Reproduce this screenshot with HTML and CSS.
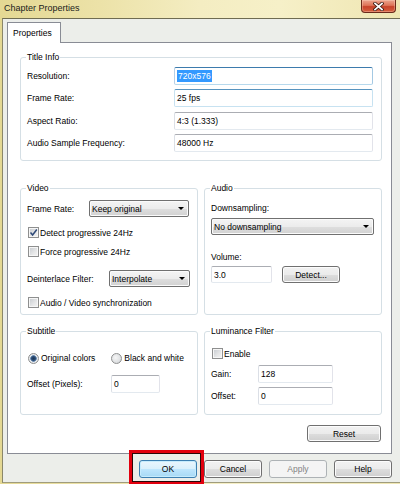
FILE: index.html
```html
<!DOCTYPE html>
<html>
<head>
<meta charset="utf-8">
<title>Chapter Properties</title>
<link rel="stylesheet" href="styles.css">
</head>
<body>
<div class="window">
  <div class="titlebar">
    <span class="title">Chapter Properties</span>
    <div class="close">
      <svg width="11" height="9" viewBox="0 0 11 9"><path d="M2 1.5 L9 7.5 M9 1.5 L2 7.5" stroke="#3b1a12" stroke-width="3.4" stroke-linecap="square" fill="none"/><path d="M2 1.5 L9 7.5 M9 1.5 L2 7.5" stroke="#ffffff" stroke-width="1.7" stroke-linecap="square" fill="none"/></svg>
    </div>
  </div>
  <div class="client">
    <div class="tabs"><div class="tab">Properties</div></div>
    <div class="panel">
      <div class="group">
        <div class="legend">Title Info</div>
        <div class="ti-grid">
          <span>Resolution:</span><div class="tb focus"><span class="sel">720x576</span></div>
          <span>Frame Rate:</span><div class="tb hover">25 fps</div>
          <span>Aspect Ratio:</span><div class="tb">4:3 (1.333)</div>
          <span>Audio Sample Frequency:</span><div class="tb">48000 Hz</div>
        </div>
      </div>

      <div class="row2 mid">
        <div class="group video">
          <div class="legend">Video</div>
          <div class="line fr">
            <span class="lbl w62">Frame Rate:</span>
            <div class="combo w100"><span class="ctext">Keep original</span><span class="arrow"></span></div>
          </div>
          <div class="chkrow detect"><span class="chk on"><svg width="9" height="9" viewBox="0 0 9 9"><path d="M1.5 4.5 L3.6 7 L7.8 1.5" stroke="#2f4a78" stroke-width="1.5" fill="none"/></svg></span><span>Detect progressive 24Hz</span></div>
          <div class="chkrow force"><span class="chk"></span><span>Force progressive 24Hz</span></div>
          <div class="line deint">
            <span class="lbl w82">Deinterlace Filter:</span>
            <div class="combo w81"><span class="ctext">Interpolate</span><span class="arrow"></span></div>
          </div>
          <div class="chkrow avsync"><span class="chk"></span><span>Audio / Video synchronization</span></div>
        </div>
        <div class="group audio">
          <div class="legend">Audio</div>
          <div class="txt ds">Downsampling:</div>
          <div class="combo w163 dsel"><span class="ctext">No downsampling</span><span class="arrow"></span></div>
          <div class="txt vol">Volume:</div>
          <div class="line volrow">
            <div class="tb w61 h17">3.0</div>
            <div class="btn detect-btn">Detect...</div>
          </div>
        </div>
      </div>

      <div class="row2 bot">
        <div class="group subtitle">
          <div class="legend">Subtitle</div>
          <div class="radiorow">
            <span class="radio on"></span><span>Original colors</span>
            <span class="radio second"></span><span>Black and white</span>
          </div>
          <div class="line offs">
            <span class="lbl w84">Offset (Pixels):</span>
            <div class="tb w49">0</div>
          </div>
        </div>
        <div class="group lum">
          <div class="legend">Luminance Filter</div>
          <div class="chkrow enable"><span class="chk"></span><span>Enable</span></div>
          <div class="line gain">
            <span class="lbl w47">Gain:</span>
            <div class="tb w75">128</div>
          </div>
          <div class="line loff">
            <span class="lbl w47">Offset:</span>
            <div class="tb w75">0</div>
          </div>
        </div>
      </div>

      <div class="reset-row"><div class="btn reset">Reset</div></div>
    </div>
    <div class="buttons">
      <div class="okwrap"><div class="btn dlg default">OK</div></div>
      <div class="btn dlg">Cancel</div>
      <div class="btn dlg disabled">Apply</div>
      <div class="btn dlg">Help</div>
    </div>
  </div>
</div>
</body>
</html>
```
FILE: styles.css
```css
* { box-sizing: border-box; }
html, body { margin: 0; padding: 0; }
body {
  width: 400px;
  height: 484px;
  overflow: hidden;
  font-family: "Liberation Sans", Arial, sans-serif;
  font-size: 8.5px;
  color: #000;
  background:
    linear-gradient(to right, #e4d893 0%, #ece2a8 25%, #f4edc2 50%, #f6f0c8 70%, #efe6b2 100%);
}
.window {
  display: flex;
  flex-direction: column;
  height: 484px;
}
.titlebar {
  height: 18px;
  flex: none;
  display: flex;
  justify-content: space-between;
  align-items: flex-start;
  padding-left: 4px;
}
.title {
  font-size: 9px;
  line-height: 16px;
  color: #1b1b1b;
}
.close {
  width: 35px;
  height: 13px;
  margin-right: 4px;
  border: 1px solid #6a2a1a;
  border-top: none;
  border-radius: 0 0 4px 4px;
  background: linear-gradient(#eca58e 0%, #de7458 45%, #c8432a 55%, #d6603f 100%);
  box-shadow: inset 0 0 0 1px rgba(255,220,200,0.35);
  display: flex;
  align-items: center;
  justify-content: center;
}
.client {
  flex: 1;
  margin-left: 2px;
  margin-bottom: 3px;
  border-left: 1px solid #8a876a;
  border-top: 1px solid #6f6c52;
  border-bottom: 1px solid #a09c7c;
  background: #eceeea;
  padding: 3px 8px 4px 4px;
  display: flex;
  flex-direction: column;
}
.tabs { display: flex; }
.tab {
  position: relative;
  z-index: 1;
  width: 54px;
  height: 21px;
  margin-bottom: -1px;
  border: 1px solid #898c95;
  border-bottom: none;
  background: #fff;
  padding-left: 5px;
  line-height: 20px;
}
.panel {
  border: 1px solid #898c95;
  background: #fff;
  padding: 14px 9px 11px 12px;
  display: flex;
  flex-direction: column;
}
.group {
  border: 1px solid #d5dfe5;
  border-radius: 3px;
  padding: 0 7px 0 6px;
}
.legend {
  width: fit-content;
  margin: -6px 0 0 -1px;
  padding: 0 1px;
  background: #fff;
  line-height: 10px;
}
.ti-grid {
  display: grid;
  grid-template-columns: 147px 199px;
  grid-auto-rows: 18px;
  row-gap: 4.4px;
  align-items: center;
  margin-top: 5px;
  padding-bottom: 8px;
}
.tb {
  height: 18px;
  border: 1px solid;
  border-color: #abadb3 #e2e3ea #e3e9ef #dbdfe6;
  border-radius: 2px;
  background: #fff;
  padding-left: 2px;
  display: flex;
  align-items: center;
}
.tb.focus { border-color: #3d7bad #a4c9e3 #b7d9ed #b5cfe7; }
.tb.hover { border-color: #5794bf #c7e2f1 #c7e2f1 #c7e2f1; }
.sel {
  background: #3399ff;
  color: #fff;
  line-height: 12px;
  padding: 0 1px 0 1px;
}
.row2 {
  display: flex;
  gap: 6px;
}
.row2 > .group { flex: 1 1 0; }
.mid { margin-top: 27px; }
.bot { margin-top: 16px; }
.line {
  display: flex;
  align-items: center;
}
.lbl { flex: none; }
.w47 { width: 47px; }
.w49 { width: 49px; }
.w61 { width: 61px; }
.w62 { width: 62px; }
.w75 { width: 75px; }
.w81 { width: 81px; }
.w82 { width: 82px; }
.w84 { width: 84px; }
.w100 { width: 100px; }
.w163 { width: 163px; }
.h17 { height: 17px; }
.combo {
  height: 17px;
  flex: none;
  border: 1px solid #707070;
  border-radius: 2px;
  background: linear-gradient(#f4f4f4 0%, #ececec 50%, #dedede 52%, #d2d2d2 100%);
  box-shadow: inset 0 0 0 1px #fbfbfb;
  display: flex;
  align-items: center;
  padding: 0 4px 0 2px;
}
.ctext { flex: 1; }
.arrow {
  width: 0;
  height: 0;
  border-left: 3px solid transparent;
  border-right: 3px solid transparent;
  border-top: 3px solid #000;
}
.fr { margin-top: 7px; }
.chkrow {
  display: flex;
  align-items: center;
  height: 13px;
}
.chk {
  width: 11px;
  height: 11px;
  flex: none;
  margin: 0 1px 0 1px;
  border: 1px solid #8e8f8f;
  background: linear-gradient(135deg, #c5c9ce 0%, #e6e7e8 60%, #f4f4f4 100%);
  box-shadow: inset 0 0 0 1px #f6f6f6;
  display: flex;
  align-items: center;
  justify-content: center;
}
.detect { margin-top: 9px; }
.force { margin-top: 6px; }
.deint { margin-top: 12px; }
.avsync { margin-top: 9px; }
.video { padding-bottom: 5px; }
.txt { line-height: 10px; }
.ds { margin-top: 10px; }
.dsel { margin-top: 5px; }
.vol { margin-top: 17px; }
.volrow { margin-top: 4px; }
.btn {
  border: 1px solid #707070;
  border-radius: 3px;
  background: linear-gradient(#f2f2f2 0%, #ebebeb 50%, #dddddd 52%, #cfcfcf 100%);
  box-shadow: inset 0 0 0 1px #fcfcfc;
  display: flex;
  align-items: center;
  justify-content: center;
}
.detect-btn {
  width: 58px;
  height: 17px;
  margin-left: 10px;
}
.radiorow {
  display: flex;
  align-items: center;
  height: 12px;
  margin-top: 16px;
}
.radio {
  width: 11px;
  height: 11px;
  flex: none;
  border-radius: 50%;
  border: 1px solid #8e8f8f;
  background: radial-gradient(circle at 40% 40%, #f6f6f6 0%, #dfe1e3 60%, #c6cacf 100%);
  margin: 0 2px 0 1px;
}
.radio.on {
  background: radial-gradient(circle, #1c3554 0, #2b4d76 2px, #6d8db3 3px, #eceeef 3.6px, #cfd2d6 100%);
}
.radio.second { margin-left: 16px; }
.offs { margin-top: 11px; }
.subtitle { padding-bottom: 20px; }
.enable { margin-top: 11px; }
.gain { margin-top: 5px; }
.loff { margin-top: 4px; }
.lum { padding-bottom: 9px; }
.reset-row {
  display: flex;
  justify-content: flex-end;
  margin-top: 10px;
  padding-right: 1px;
}
.reset {
  width: 74px;
  height: 17px;
}
.buttons {
  display: flex;
  justify-content: flex-end;
  gap: 7px;
  margin-top: 6px;
}
.dlg {
  width: 58px;
  height: 18px;
}
.btn.default {
  border-color: #3c7fb1;
  background: linear-gradient(#eaf6fd 0%, #d9f0fc 50%, #bee6fd 52%, #a7d9f5 100%);
  box-shadow: inset 0 0 0 1px #c6ecfd;
}
.btn.disabled {
  border-color: #adb2b5;
  background: #f4f4f4;
  box-shadow: none;
  color: #838383;
}
.okwrap { position: relative; }
.okwrap::after {
  content: "";
  position: absolute;
  left: -10px;
  top: -10px;
  right: -7px;
  bottom: -7px;
  border: 3px solid #e2000e;
  box-shadow: inset 0 0 0 1px #2a0808;
  pointer-events: none;
}
```
